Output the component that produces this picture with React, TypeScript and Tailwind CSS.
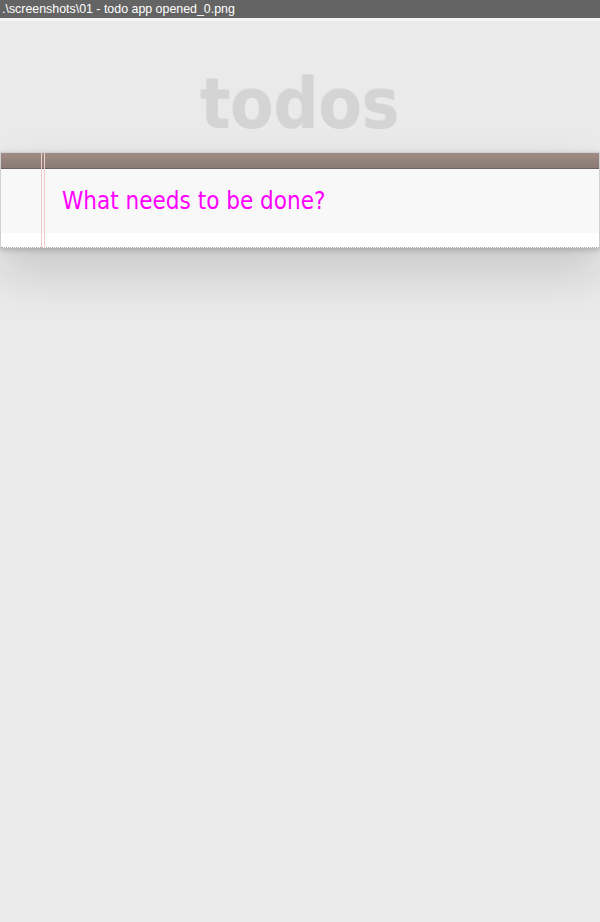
export default function App() {
  return (
    <div className="min-h-[922px] w-[600px] bg-[#eaeaea] font-['Liberation_Sans',sans-serif]">
      {/* window caption */}
      <div className="h-[18px] bg-[#646464] pl-[2px] text-[12.4px] leading-[18px] text-white">
        .\screenshots\01 - todo app opened_0.png
      </div>
      <div className="h-[3px] bg-[#f4f4f4]" />

      <h1 className="pt-[39px] pb-[4px] text-center font-['DejaVu_Sans_Condensed','DejaVu_Sans',sans-serif] text-[70px] font-bold leading-[88px] text-[#d4d4d4] [text-shadow:-1px_-1px_0_rgba(0,0,0,0.05)]">
        todos
      </h1>

      <div className="relative border-x border-t border-[#d0d0d0] bg-white shadow-[0_2px_6px_0_rgba(0,0,0,0.2),0_25px_50px_0_rgba(0,0,0,0.15)]">
        <div className="h-[16px] border-b border-[#6c615c] bg-gradient-to-b from-[#9e8b84] to-[#8a7a74]" />
        <div className="bg-[#f8f8f8] py-[16px] pl-[61px] font-['DejaVu_Sans_Condensed','DejaVu_Sans',sans-serif] text-[24px] leading-[32px] text-[#ff00ff]">
          What needs to be done?
        </div>
        <div className="h-[15px] border-b border-dotted border-[#a8a8a8] bg-white" />
        <div className="pointer-events-none absolute top-0 bottom-0 left-[40px] w-[4px] border-x border-[#f0cccc]" />
      </div>
    </div>
  )
}
